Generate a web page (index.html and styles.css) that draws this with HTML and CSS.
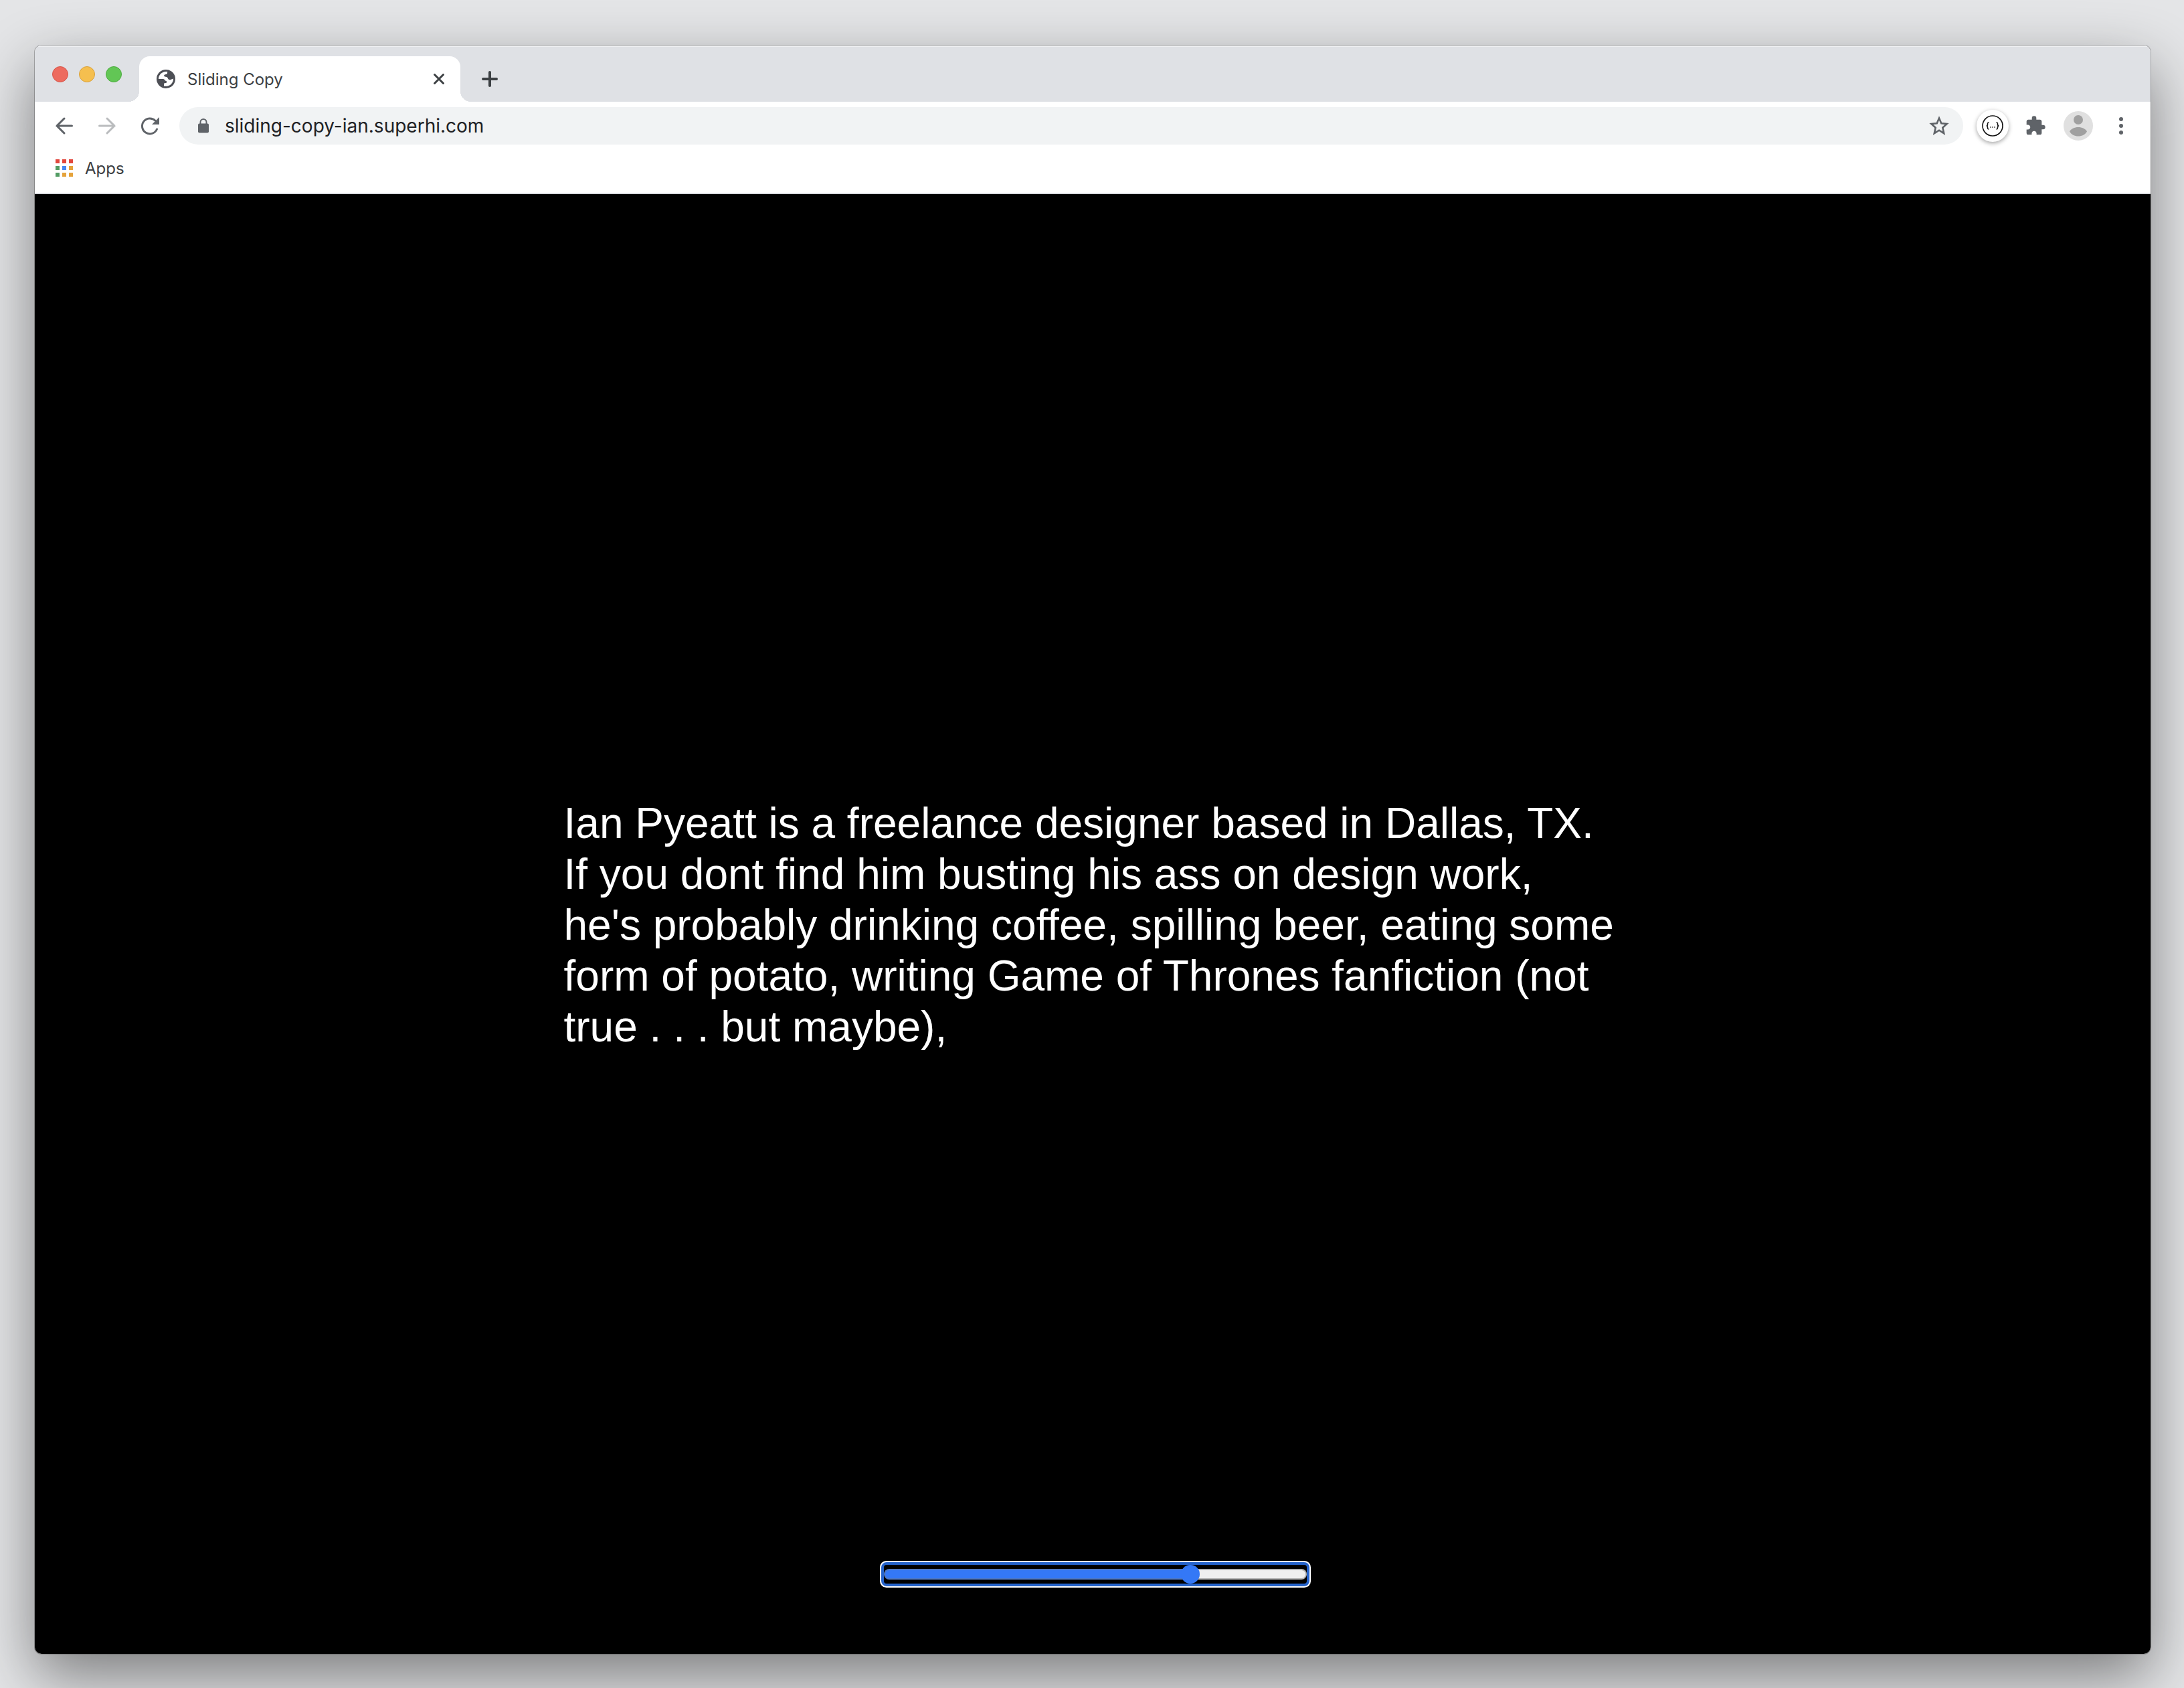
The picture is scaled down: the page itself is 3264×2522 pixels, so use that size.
FILE: index.html
```html
<!DOCTYPE html>
<html lang="en">
<head>
<meta charset="utf-8">
<title>Sliding Copy</title>
<meta name="viewport" content="width=device-width, initial-scale=1">
<link rel="stylesheet" href="styles.css">
</head>
<body>
<div class="window">
  <header class="tabstrip">
    <div class="lights">
      <button class="light light-close" aria-label="Close window"></button>
      <button class="light light-min" aria-label="Minimize window"></button>
      <button class="light light-max" aria-label="Zoom window"></button>
    </div>
    <div class="tab">
      <svg class="favicon" viewBox="0 0 28 28" aria-hidden="true">
        <circle cx="14" cy="14" r="14" fill="#4d4f55"/>
        <path fill="#fff" d="M2.900 14C2.900 7.900 7.900 2.900 14 2.900L16.200 3.100L16 5.500C15.800 6.600 14.600 7 13 7.200C11.400 7.400 11 8.400 11.200 9.600C11.400 10.600 13 10.800 15 11C17 11.200 16.600 14.600 19 15.200C21.200 15.600 22.400 14.200 25.100 13.600C25.200 20.400 19.400 25.800 11 24.700V21.500C11 20 12.400 20.200 13.600 20C15 19.800 15.400 18.800 15 17.600C14.600 16.600 12.800 17 12.400 15.800C12 14.600 10.600 14 9 14Z"/>
      </svg>
      <span class="tab-title">Sliding Copy</span>
      <button class="icon-btn" aria-label="Close tab">
        <svg class="i20" viewBox="0 0 20 20"><path d="M3.500 3.500l13 13M16.500 3.500l-13 13" stroke="#3c4043" stroke-width="3" stroke-linecap="round"/></svg>
      </button>
    </div>
    <button class="icon-btn new-tab" aria-label="New tab">
      <svg class="i24" viewBox="0 0 24 24"><path d="M12 2v20M2 12h20" stroke="#3c4043" stroke-width="4" stroke-linecap="round"/></svg>
    </button>
  </header>

  <nav class="toolbar" aria-label="Browser">
    <div class="nav-buttons">
      <button class="icon-btn" aria-label="Back">
        <svg class="i32" viewBox="0 0 32 32" fill="none" stroke="#5f6368" stroke-width="3" stroke-linecap="round"><path d="M27.500 16H5M16 5L5 16l11 11"/></svg>
      </button>
      <button class="icon-btn" aria-label="Forward" disabled>
        <svg class="i32" viewBox="0 0 32 32" fill="none" stroke="#babcbe" stroke-width="3" stroke-linecap="round"><path d="M4.500 16H27M16 5l11 11L16 27"/></svg>
      </button>
      <button class="icon-btn" aria-label="Reload">
        <svg class="i32" viewBox="0 0 32 32"><path d="M26.500 21A11.500 11.500 0 1 1 24 8.200" fill="none" stroke="#5f6368" stroke-width="3" stroke-linecap="round"/><path d="M30 3v11H19z" fill="#5f6368"/></svg>
      </button>
    </div>
    <div class="omnibox">
      <svg class="i24" viewBox="0 0 24 24" aria-hidden="true"><path d="M7.500 10V6.500a4.500 4.500 0 0 1 9 0V10" fill="none" stroke="#5f6368" stroke-width="2"/><rect x="4" y="8.500" width="16" height="14" rx="2" fill="#5f6368"/></svg>
      <input class="url" type="text" aria-label="Address" value="sliding-copy-ian.superhi.com">
      <button class="icon-btn" aria-label="Bookmark this page">
        <svg class="i32" viewBox="0 0 32 32"><path d="M16 4.500l3.300 7.800 8.300.8-6.300 5.600 1.900 8.500L16 22.700l-7.200 4.500 1.900-8.500-6.300-5.600 8.300-.8z" fill="none" stroke="#5f6368" stroke-width="2.600"/></svg>
      </button>
    </div>
    <div class="actions">
      <button class="icon-btn extension" aria-label="JSON formatter">
        <svg class="i32" viewBox="0 0 32 32" fill="none" stroke="#111"><circle cx="16" cy="16" r="15" stroke-width="1.600"/><path d="M10.500 11c-2 0-2 .6-2 2.400 0 1.700-.3 2.600-1.800 2.600 1.500 0 1.800.9 1.800 2.600 0 1.800 0 2.400 2 2.400M21.500 11c2 0 2 .6 2 2.400 0 1.700.3 2.600 1.800 2.600-1.500 0-1.800.9-1.800 2.600 0 1.800 0 2.400-2 2.400" stroke-width="1.600"/><path d="M12.300 18h1.400M15.300 18h1.400M18.300 18h1.400" stroke-width="1.400"/></svg>
      </button>
      <button class="icon-btn" aria-label="Extensions">
        <svg class="i32" viewBox="0 0 24 24"><path fill="#5f6368" d="M20.500 11H19V7c0-1.100-.9-2-2-2h-4V3.500a2.500 2.500 0 0 0-5 0V5H4c-1.100 0-1.990.9-1.990 2v3.800H3.500c1.490 0 2.700 1.210 2.700 2.700s-1.210 2.700-2.700 2.700H2V20c0 1.100.9 2 2 2h3.800v-1.500c0-1.490 1.210-2.700 2.700-2.700s2.700 1.210 2.700 2.700V22H17c1.100 0 2-.9 2-2v-4h1.500a2.500 2.500 0 0 0 0-5z"/></svg>
      </button>
      <button class="icon-btn" aria-label="Profile">
        <svg class="i44" viewBox="0 0 44 44"><circle cx="22" cy="22" r="22" fill="#e0e0e0"/><circle cx="22" cy="13" r="7" fill="#a0a0a0"/><path d="M9 30.500c2-4 7.500-6.500 13-6.500s11 2.500 13 6.500c-2.500 4.500-7.500 7-13 7s-10.500-2.500-13-7z" fill="#a0a0a0"/></svg>
      </button>
      <button class="icon-btn" aria-label="Menu">
        <svg class="i32" viewBox="0 0 32 32" fill="#5f6368"><circle cx="16" cy="6" r="3"/><circle cx="16" cy="16" r="3"/><circle cx="16" cy="26" r="3"/></svg>
      </button>
    </div>
  </nav>

  <div class="bookmarks">
    <a class="bookmark" href="#apps">
      <svg class="i26" viewBox="0 0 26 26" aria-hidden="true"><path fill="#e2473d" d="M0 0h6v6H0zM10 0h6v6h-6zM20 0h6v6h-6z"/><path fill="#529c63" d="M0 10h6v6H0zM0 20h6v6H0z"/><path fill="#4688f1" d="M10 10h6v6h-6z"/><path fill="#e5a33b" d="M20 10h6v6h-6zM10 20h6v6h-6zM20 20h6v6h-6z"/></svg>
      <span>Apps</span>
    </a>
  </div>

  <main class="page">
    <p class="copy">Ian Pyeatt is a freelance designer based in Dallas, TX. If you dont find him busting his ass on design work, he's probably drinking coffee, spilling beer, eating some form of potato, writing Game of Thrones fanfiction (not true . . . but maybe),</p>
    <input class="slider" type="range" min="0" max="250" value="184" aria-label="Amount of copy shown" style="--fill: 73%">
  </main>
</div>
</body>
</html>
```
FILE: styles.css
```css
* {
  box-sizing: border-box;
}

body {
  margin: 0;
  min-height: 100vh;
  padding: 68px 50px 51px 52px;
  display: flex;
  background: #e4e5e7;
  font-family: Inter, "Liberation Sans", sans-serif;
  font-size: 24px;
  color: #3c4043;
}

.window {
  flex: 1;
  min-width: 0;
  display: flex;
  flex-direction: column;
  overflow: hidden;
  border-radius: 10px;
  background: #fff;
  box-shadow: 0 0 0 1px rgba(0, 0, 0, 0.24), 0 34px 90px rgba(0, 0, 0, 0.46);
}

.icon-btn {
  display: flex;
  align-items: center;
  justify-content: center;
  padding: 0;
  border: 0;
  background: none;
}

svg {
  display: block;
  flex: none;
}

.i20 { width: 20px; height: 20px; }
.i24 { width: 24px; height: 24px; }
.i26 { width: 26px; height: 26px; }
.i32 { width: 32px; height: 32px; }
.i44 { width: 44px; height: 44px; }

/* Tab strip */
.tabstrip {
  display: flex;
  height: 84px;
  padding-left: 26px;
  background: #dfe1e5;
  box-shadow: inset 0 2px 0 #eff0f2;
}

.lights {
  display: flex;
  align-items: center;
  gap: 16px;
  padding-top: 2px;
  padding-right: 26px;
}

.light {
  width: 24px;
  height: 24px;
  padding: 0;
  border: 1px solid;
  border-radius: 50%;
}

.light-close { background: #ed6b5f; border-color: #d65549; }
.light-min { background: #f5bf4f; border-color: #d9a13c; }
.light-max { background: #62c655; border-color: #4bab3e; }

.tab {
  position: relative;
  display: flex;
  align-items: center;
  width: 480px;
  margin-top: 16px;
  padding: 0 22px 0 26px;
  border-radius: 16px 16px 0 0;
  background: #fff;
}

.tab::before,
.tab::after {
  content: "";
  position: absolute;
  bottom: 0;
  width: 16px;
  height: 16px;
}

.tab::before {
  right: 100%;
  background: radial-gradient(circle at 0 0, transparent 16px, #fff 16px);
}

.tab::after {
  left: 100%;
  background: radial-gradient(circle at 100% 0, transparent 16px, #fff 16px);
}

.favicon {
  width: 28px;
  height: 28px;
}

.tab-title {
  flex: 1;
  padding-left: 18px;
}

.new-tab {
  width: 56px;
  margin-left: 16px;
  padding-top: 16px;
}

/* Toolbar */
.toolbar {
  display: flex;
  align-items: center;
  height: 72px;
  padding: 0 28px;
}

.nav-buttons {
  display: flex;
  gap: 32px;
}

.omnibox {
  flex: 1;
  display: flex;
  align-items: center;
  height: 56px;
  margin-left: 28px;
  padding: 0 20px 0 24px;
  border-radius: 28px;
  background: #f1f3f4;
}

.url {
  flex: 1;
  min-width: 0;
  padding: 0 0 0 20px;
  border: 0;
  background: none;
  color: #202124;
  font: 28px/36px Inter, "Liberation Sans", sans-serif;
}

.actions {
  display: flex;
  align-items: center;
  gap: 32px;
  padding-left: 20px;
}

.extension {
  width: 48px;
  height: 48px;
  margin-right: -8px;
  border-radius: 50%;
  background: #fff;
  box-shadow: 0 2px 6px rgba(0, 0, 0, 0.36);
}

.actions .i44 {
  margin: 0 -6px;
}

/* Bookmarks bar */
.bookmarks {
  display: flex;
  align-items: center;
  height: 66px;
  padding: 0 31px 10px;
  border-bottom: 2px solid #dadce0;
}

.bookmark {
  display: flex;
  align-items: center;
  gap: 18px;
  color: inherit;
  text-decoration: none;
}

/* Page content */
.page {
  flex: 1;
  display: grid;
  grid-template-rows: 1fr auto 1fr;
  justify-items: center;
  background: #000;
}

.copy {
  grid-row: 2;
  width: 50%;
  margin: 0;
  padding-top: 2px;
  color: #fff;
  font: 64px/76px "Liberation Sans", Arial, sans-serif;
}

.slider {
  grid-row: 3;
  align-self: end;
  width: 20%;
  height: 28px;
  margin: 0 0 105px 8px;
  appearance: none;
  border-radius: 4px;
  background: #000;
  outline: 0;
  box-shadow: 0 0 0 4px #2563cb, 0 0 0 6px #fff;
}

.slider::-webkit-slider-runnable-track {
  height: 16px;
  border: 2px solid transparent;
  border-radius: 8px;
  background:
    linear-gradient(90deg, #3478f6 var(--fill), #efefef var(--fill)) padding-box,
    linear-gradient(90deg, #4f78c4 var(--fill), #b2b2b2 var(--fill)) border-box;
}

.slider::-webkit-slider-thumb {
  appearance: none;
  width: 28px;
  height: 28px;
  margin-top: -8px;
  border-radius: 50%;
  background: #3478f6;
}
```
